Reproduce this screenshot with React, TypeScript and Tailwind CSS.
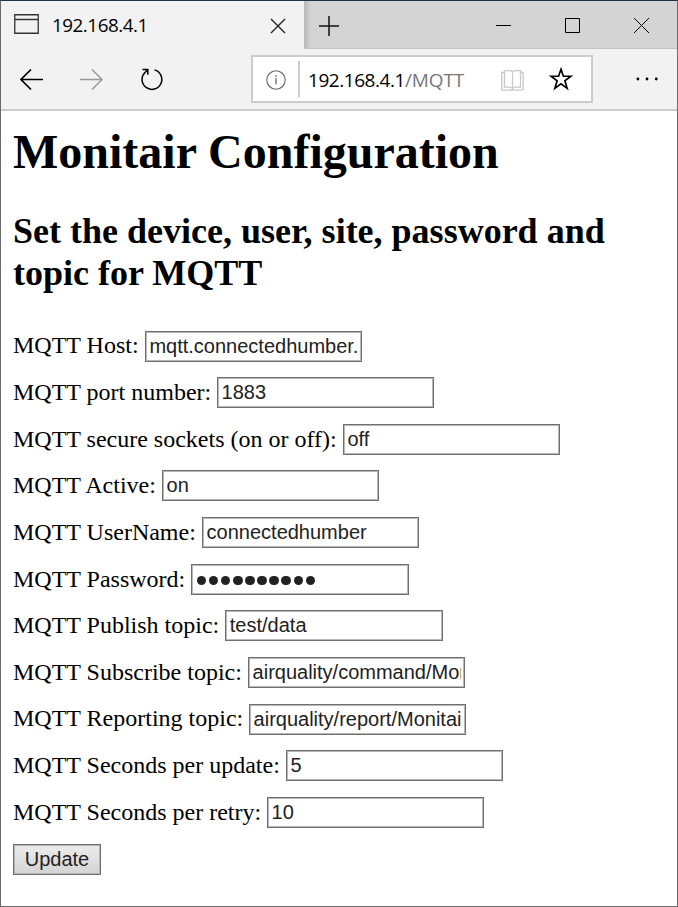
import React from "react";

type Field = { label: string; value: string; type?: string; width: string };

const fields: Field[] = [
  { label: "MQTT Host:", value: "mqtt.connectedhumber.", width: "w-[132px]" },
  { label: "MQTT port number:", value: "1883", width: "w-[204.2px]" },
  { label: "MQTT secure sockets (on or off):", value: "off", width: "w-[330px]" },
  { label: "MQTT Active:", value: "on", width: "w-[149.2px]" },
  { label: "MQTT UserName:", value: "connectedhumber", width: "w-[189.2px]" },
  { label: "MQTT Password:", value: "●●●●●●●●●●", type: "password", width: "w-[178.4px]" },
  { label: "MQTT Publish topic:", value: "test/data", width: "w-[212.4px]" },
  { label: "MQTT Subscribe topic:", value: "airquality/command/Mon", width: "w-[235.2px]" },
  { label: "MQTT Reporting topic:", value: "airquality/report/Monitai", width: "w-[236.2px]" },
  { label: "MQTT Seconds per update:", value: "5", width: "w-[273.2px]" },
  { label: "MQTT Seconds per retry:", value: "10", width: "w-[254.2px]" },
];

function TabStrip() {
  return (
    <div className="flex h-12 shrink-0 bg-[#d4d4d4]">
      <div className="flex w-[303px] bg-[#f2f2f2]">
        <svg className="ml-[13px] mt-[13px] h-5 w-[25px] shrink-0" viewBox="0 0 25 20" fill="none" stroke="#333">
          <path d="M.75.75h23.5v18.5H.75zM1 5.5h23" strokeWidth="1.3" />
        </svg>
        <span className="ml-[13px] mt-[10px] w-[218px] shrink-0 whitespace-nowrap text-[18.8px] leading-7 tracking-[-0.45px] text-black">
          192.168.4.1
        </span>
        <svg className="mt-[17px] h-4 w-4 shrink-0" viewBox="0 0 16 16" fill="none" stroke="#222">
          <path d="M1 1l14 14M15 1L1 15" strokeWidth="1.4" />
        </svg>
      </div>
      <div className="flex grow border-b border-[#c4c4c4] bg-linear-to-r from-[#b8b8b8] via-[#d4d4d4] via-2% to-[#d4d4d4]">
        <svg className="ml-[15px] mt-[15px] h-5 w-5" viewBox="0 0 20 20" fill="none" stroke="#111">
          <path d="M0 10h20M10 0v20" strokeWidth="1.5" />
        </svg>
        <svg className="ml-[157px] mt-[17px] h-4 w-[15px]" viewBox="0 0 15 16" fill="none" stroke="#000">
          <path d="M0 7.5h15" />
        </svg>
        <svg className="ml-[54px] mt-[17px] h-[15px] w-[15px]" viewBox="0 0 15 15" fill="none" stroke="#000">
          <path d="M.5.5h14v14H.5z" />
        </svg>
        <svg className="ml-[54px] mt-[17px] h-[15px] w-[15px]" viewBox="0 0 15 15" fill="none" stroke="#000">
          <path d="M0 0l15 15M15 0L0 15" />
        </svg>
      </div>
    </div>
  );
}

function Toolbar() {
  return (
    <div className="flex h-[62px] shrink-0 border-b-2 border-[#cccccc] bg-[#f2f2f2]">
      <svg className="ml-[19px] mt-5 h-[21px] w-[23px]" viewBox="0 0 23 21" fill="none" stroke="#000">
        <path d="M23 10.5H1M11 .5L1 10.5l10 10" strokeWidth="1.6" />
      </svg>
      <svg className="ml-[37px] mt-5 h-[21px] w-[23px]" viewBox="0 0 23 21" fill="none" stroke="#999">
        <path d="M0 10.5h22M12 .5l10 10-10 10" strokeWidth="1.5" />
      </svg>
      <svg className="ml-[37px] mt-[19px] h-[23px] w-[23px]" viewBox="0 0 23 23" fill="none" stroke="#000">
        <path d="M14.5 1.9A9.900 9.900 0 1 1 5.2 4.2L7.5 1.700M2.500 1.500H7.800v5.300" strokeWidth="1.5" />
      </svg>
      <div className="ml-[88px] mt-[6px] flex h-12 w-[342px] border-2 border-[#cccccc] bg-white">
        <svg className="ml-[13px] mt-[13px] h-5 w-5 shrink-0" viewBox="0 0 20 20" fill="none" stroke="#666">
          <circle cx="10" cy="10" r="9.2" strokeWidth="1.1" />
          <path d="M10 8.3v6M10 5v1.8" strokeWidth="1.3" />
        </svg>
        <div className="ml-3 mt-1 h-9 w-[2px] shrink-0 bg-[#cccccc]" />
        <div className="ml-2 mt-[9px] w-[193px] shrink-0 whitespace-nowrap text-[19px] leading-7 tracking-[-0.45px] text-black">
          192.168.4.1<span className="tracking-[-0.1px] text-[#777]">/MQTT</span>
        </div>
        <svg className="mt-[13px] h-[21px] w-[23px] shrink-0" viewBox="0 0 23 21" fill="none" stroke="#c8c8c8">
          <path d="M3.5 2.5H.8v17.700h21.400V2.500h-2.700M11.500 2.500v17M11.500 1.700c-1-.8-2-1-3-1h-5v16.500h5c1 0 2 .2 3 1.500 1-1.300 2-1.500 3-1.500h5V.7h-5c-1 0-2 .2-3 1" strokeWidth="1.3" />
        </svg>
        <svg className="ml-[25px] mt-[10px] h-[24px] w-[24px] shrink-0" viewBox="0 0 23 23" fill="none" stroke="#000">
          <path d="M11.500 2.200l2.300 6.700h7.200l-5.800 4.300 2.200 7.300-5.900-4.300-5.900 4.300 2.200-7.300L2 8.900h7.200z" strokeWidth="1.600" />
        </svg>
      </div>
      <svg className="ml-[43px] mt-[28px] h-1 w-[23px]" viewBox="0 0 23 4">
        <circle cx="1.900" cy="2" r="1.400" />
        <circle cx="11" cy="2" r="1.400" />
        <circle cx="20.300" cy="2" r="1.400" />
      </svg>
    </div>
  );
}

function FieldRow({ field }: { field: Field }) {
  return (
    <div className="flex h-[46.65px] items-start">
      <label className={`${field.width} shrink-0 whitespace-nowrap pt-[0.85px] leading-[28px]`}>{field.label}</label>
      <div className="h-[31px] w-[217.2px] border border-[#707070] pl-[3.4px] pr-[3px] font-['Liberation_Sans',sans-serif] text-[20px] text-[#222] shadow-[inset_0_0_0_1px_#b8b8b8]">
        {field.type === "password" ? (
          <div className="flex h-[29px] items-center pl-[1px] pt-[3px]">
            {Array.from(field.value).map((_, i) => (
              <span key={i} className="flex w-[12.1px] shrink-0">
                <span className="h-[9.5px] w-[9.5px] rounded-full bg-[#222]" />
              </span>
            ))}
          </div>
        ) : (
          <div className="overflow-hidden whitespace-nowrap leading-[29px]">{field.value}</div>
        )}
      </div>
    </div>
  );
}

export default function App() {
  return (
    <div className="flex h-[907px] w-[678px] flex-col border border-[#6b6b6b] border-t-[#223344] bg-white font-['Open_Sans','Noto_Sans',sans-serif]">
      <TabStrip />
      <Toolbar />
      <main className="grow pl-3 font-['Liberation_Serif',serif] text-[24px] text-black">
        <h1 className="pt-[13px] text-[48px] font-bold leading-[55px]">Monitair Configuration</h1>
        <h2 className="mt-[31px] text-[36px] font-bold leading-[42px]">
          Set the device, user, site, password and
          <br />
          topic for MQTT
        </h2>
        <form className="pt-[36.5px]">
          {fields.map((f) => (
            <FieldRow key={f.label} field={f} />
          ))}
          <button
            type="button"
            className="flex h-[31px] w-[88px] items-center justify-center border border-[#707070] bg-linear-to-b from-[#ececec] to-[#d4d4d4] font-['Liberation_Sans',sans-serif] text-[20px] leading-[29px] text-[#222] shadow-[inset_0_0_0_1px_#b4b4b4]"
          >
            Update
          </button>
        </form>
      </main>
    </div>
  );
}
